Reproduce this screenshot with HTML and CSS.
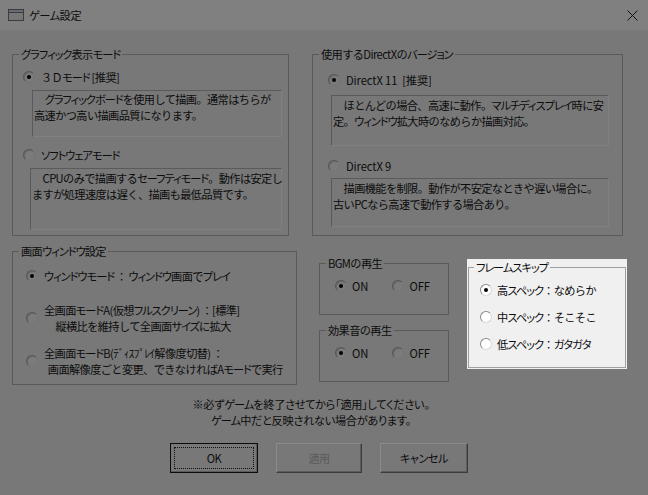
FILE: index.html
```html
<!DOCTYPE html>
<html lang="ja">
<head>
<meta charset="utf-8">
<title>ゲーム設定</title>
<link rel="stylesheet" href="styles.css">
</head>
<body>
<div class="dialog">
  <header class="titlebar">
    <svg class="app-icon" width="16" height="12" viewBox="0 0 16 12"><rect x="0.5" y="0.5" width="15" height="11" fill="#777" stroke="#3c3c3c"/><rect x="1" y="1" width="14" height="2" fill="#6a6a78"/><rect x="1" y="3" width="14" height="1" fill="#3c3c3c"/><rect x="12" y="9" width="2" height="1" fill="#8a6a50"/></svg>
    <span class="title"><span class="k">ゲーム</span>設定</span>
    <svg class="close" width="11" height="11" viewBox="0 0 11 11"><path d="M0.5 0.5L10.5 10.5M10.5 0.5L0.5 10.5" stroke="#111" stroke-width="1" fill="none"/></svg>
  </header>
  <main class="content">
    <section class="row-top">
      <fieldset class="group g-gfx">
        <legend><span class="k">グラフィック</span>表示<span class="k">モード</span></legend>
        <div class="opt o-3d"><i class="radio on"></i><span>３Ｄ<span class="k">モード</span> [推奨]</span></div>
        <p class="desc d-3d">　<span class="k">グラフィックボード</span>を使用して描画。通常はちらが<br>高速かつ高い描画品質になります。</p>
        <div class="opt o-soft"><i class="radio"></i><span class="k">ソフトウェアモード</span></div>
        <p class="desc d-soft">　CPUのみで描画する<span class="k">セーフティモード</span>。動作は安定し<br>ますが処理速度は遅く、描画も最低品質です。</p>
      </fieldset>
      <fieldset class="group g-dx">
        <legend>使用するDirectXの<span class="k">バージョン</span></legend>
        <div class="opt o-dx11"><i class="radio on"></i><span>DirectX 11&nbsp; [推奨]</span></div>
        <p class="desc d-dx11">　ほとんどの場合、高速に動作。<span class="k">マルチディスプレイ</span>時に安<br>定。<span class="k">ウィンドウ</span>拡大時のなめらか描画対応。</p>
        <div class="opt o-dx9"><i class="radio"></i><span>DirectX 9</span></div>
        <p class="desc d-dx9">　描画機能を制限。動作が不安定なときや遅い場合に。<br>古いPCなら高速で動作する場合あり。</p>
      </fieldset>
    </section>
    <section class="row-bottom">
      <fieldset class="group g-win">
        <legend>画面<span class="k">ウィンドウ</span>設定</legend>
        <div class="opt o-w1"><i class="radio on"></i><span><span class="k">ウィンドウモード</span> ： <span class="k">ウィンドウ</span>画面で<span class="k">プレイ</span></span></div>
        <div class="opt o-w2"><i class="radio"></i><span>全画面<span class="k">モード</span>A(仮想<span class="k">フルスクリーン</span>) ：[標準]<br>&nbsp;&nbsp;&nbsp;&nbsp;&nbsp;&nbsp;縦横比を維持して全画面<span class="k">サイズ</span>に拡大</span></div>
        <div class="opt o-w3"><i class="radio"></i><span>全画面<span class="k">モード</span>B(ﾃﾞｨｽﾌﾟﾚｲ解像度切替) ：<br>&nbsp;&nbsp;画面解像度ごと変更、できなければA<span class="k">モード</span>で実行</span></div>
      </fieldset>
      <div class="audio">
        <fieldset class="group g-audio">
          <legend>BGMの再生</legend>
          <div class="onoff"><label class="opt"><i class="radio on"></i><span>ON</span></label><label class="opt"><i class="radio"></i><span>OFF</span></label></div>
        </fieldset>
        <fieldset class="group g-audio">
          <legend>効果音の再生</legend>
          <div class="onoff"><label class="opt"><i class="radio on"></i><span>ON</span></label><label class="opt"><i class="radio"></i><span>OFF</span></label></div>
        </fieldset>
      </div>
      <div class="lit">
        <fieldset class="group g-skip">
          <legend><span class="k">フレームスキップ</span></legend>
          <div class="opt"><i class="radio on"></i><span>高<span class="k">スペック</span>：なめらか</span></div>
          <div class="opt"><i class="radio"></i><span>中<span class="k">スペック</span>：そこそこ</span></div>
          <div class="opt"><i class="radio"></i><span>低<span class="k">スペック</span>：<span class="k">ガタガタ</span></span></div>
        </fieldset>
      </div>
    </section>
    <p class="notice">※必ず<span class="k">ゲーム</span>を終了させてから「適用」してください。<br><span class="k">ゲーム</span>中だと反映されない場合があります。</p>
    <div class="buttons">
      <button class="btn default"><span class="focus">OK</span></button>
      <button class="btn disabled">適用</button>
      <button class="btn"><span class="k">キャンセル</span></button>
    </div>
  </main>
</div>
</body>
</html>
```
FILE: styles.css
```css
* { box-sizing: border-box; }
html, body { margin: 0; height: 100%; }
body {
  background: #787878;
  color: #0c0c0c;
  font-family: "Noto Sans CJK JP", "Noto Sans", sans-serif;
  font-size: 11.2px;
  line-height: 16px;
  letter-spacing: -0.6px;
  font-feature-settings: "pkna";
  overflow: hidden;
}
.k { font-feature-settings: "palt"; letter-spacing: -1px; }
.dialog { width: 648px; height: 495px; display: flex; flex-direction: column; }
.titlebar {
  height: 30px;
  flex: none;
  background: #808080;
  display: flex;
  align-items: center;
  padding: 0 10px 0 8px;
}
.app-icon { flex: none; }
.title { margin-left: 5px; flex: 1; letter-spacing: -0.3px; }
.title .k { letter-spacing: -0.5px; }
.content { padding: 16px 0 0 12px; flex: 1; }
.row-top { display: grid; grid-template-columns: 277px 311px; column-gap: 23px; }
.row-bottom { display: flex; margin-top: 7px; align-items: flex-start; }
.group {
  margin: 0;
  padding: 0;
  min-width: 0;
  border: 1px solid #5a5a5a;
  display: block;
}
.group legend { padding: 0 2px; margin-left: 6px; line-height: 16px; }
.opt { display: flex; align-items: center; gap: 6px; white-space: nowrap; }
.radio {
  flex: none;
  width: 12px;
  height: 12px;
  border-radius: 50%;
  border: 1px solid #555;
  border-right-color: #767676;
  border-bottom-color: #767676;
  background: #7b7b7b;
  box-shadow: inset 1px 1px 0 #6a6a6a;
  position: relative;
  display: block;
}
.radio.on::after {
  content: "";
  position: absolute;
  left: 3px;
  top: 3px;
  width: 4px;
  height: 4px;
  border-radius: 50%;
  background: #000;
}
.desc {
  margin: 0;
  border-top: 1px solid #5a5a5a;
  border-left: 1px solid #5a5a5a;
  border-right: 1px solid #808080;
  border-bottom: 1px solid #808080;
  padding: 1px 0 0 1px;
  white-space: nowrap;
}
.g-gfx { height: 190px; }
.o-3d { margin: 7px 0 0 10px; gap: 6px; }
.d-3d { margin: 5px 0 0 19px; width: 250px; height: 47px; padding-top: 0; }
.o-soft { margin: 10px 0 0 10px; gap: 6px; }
.d-soft { margin: 5px 0 0 17px; width: 252px; height: 62px; }
.g-dx { height: 190px; }
.o-dx11 { margin: 10px 0 0 15px; gap: 6px; }
.d-dx11 { margin: 7px 0 0 18px; width: 278px; height: 51px; }
.o-dx9 { margin: 12px 0 0 15px; gap: 6px; }
.d-dx9 { margin: 4px 0 0 18px; width: 278px; height: 49px; }
.o-dx11 span, .o-dx9 span { letter-spacing: -0.1px; }
.g-win { width: 285px; height: 142px; }
.o-w1 { margin: 9px 0 0 13px; }
.o-w2 { margin: 18px 0 0 13px; }
.o-w3 { margin: 11px 0 0 13px; }
.audio { width: 130px; margin: 12px 0 0 22px; display: flex; flex-direction: column; gap: 7px; }
.g-audio { height: 60px; }
.onoff { display: flex; margin: 7px 0 0 15px; gap: 24px; }
.onoff .opt { gap: 5px; }
.onoff span { letter-spacing: 0; }
.lit {
  width: 160px;
  margin: 16px 0 0 18px;
  background: #f0f0f0;
  height: 110px;
  padding: 0 1px 1px;
}
.g-skip { height: 109px; border-color: #a0a0a0; }
.g-skip legend { margin-left: 5px; }
.g-skip .opt { margin-left: 11px; height: 16px; gap: 5px; }
.g-skip .opt:nth-of-type(1) { margin-top: 7px; }
.g-skip .opt:nth-of-type(n+2) { margin-top: 11px; }
.g-skip .radio {
  background: #fff;
  border-color: #8a8a8a;
  border-right-color: #d8d8d8;
  border-bottom-color: #d8d8d8;
  box-shadow: none;
}
.notice {
  margin: 11px 0 0;
  width: 598px;
  text-align: center;
  font-feature-settings: "palt";
  letter-spacing: -0.3px;
}
.buttons { display: flex; margin: 15px 0 0 158px; gap: 18px; }
.btn {
  width: 88px;
  height: 30px;
  font: inherit;
  letter-spacing: inherit;
  color: inherit;
  background: #787878;
  border: 1px solid #8a8a8a;
  border-right-color: #3c3c3c;
  border-bottom-color: #3c3c3c;
  box-shadow: inset -1px -1px 0 #5c5c5c;
  padding: 0;
}
.btn .k { letter-spacing: -0.5px; }
.btn.default { outline: 1px solid #0c0c0c; outline-offset: -1px; padding: 3px; }
.focus {
  display: flex;
  height: 100%;
  align-items: center;
  justify-content: center;
  border: 1px dotted #111;
}
.btn.disabled { color: #5a5a5a; width: 86px; }
```
